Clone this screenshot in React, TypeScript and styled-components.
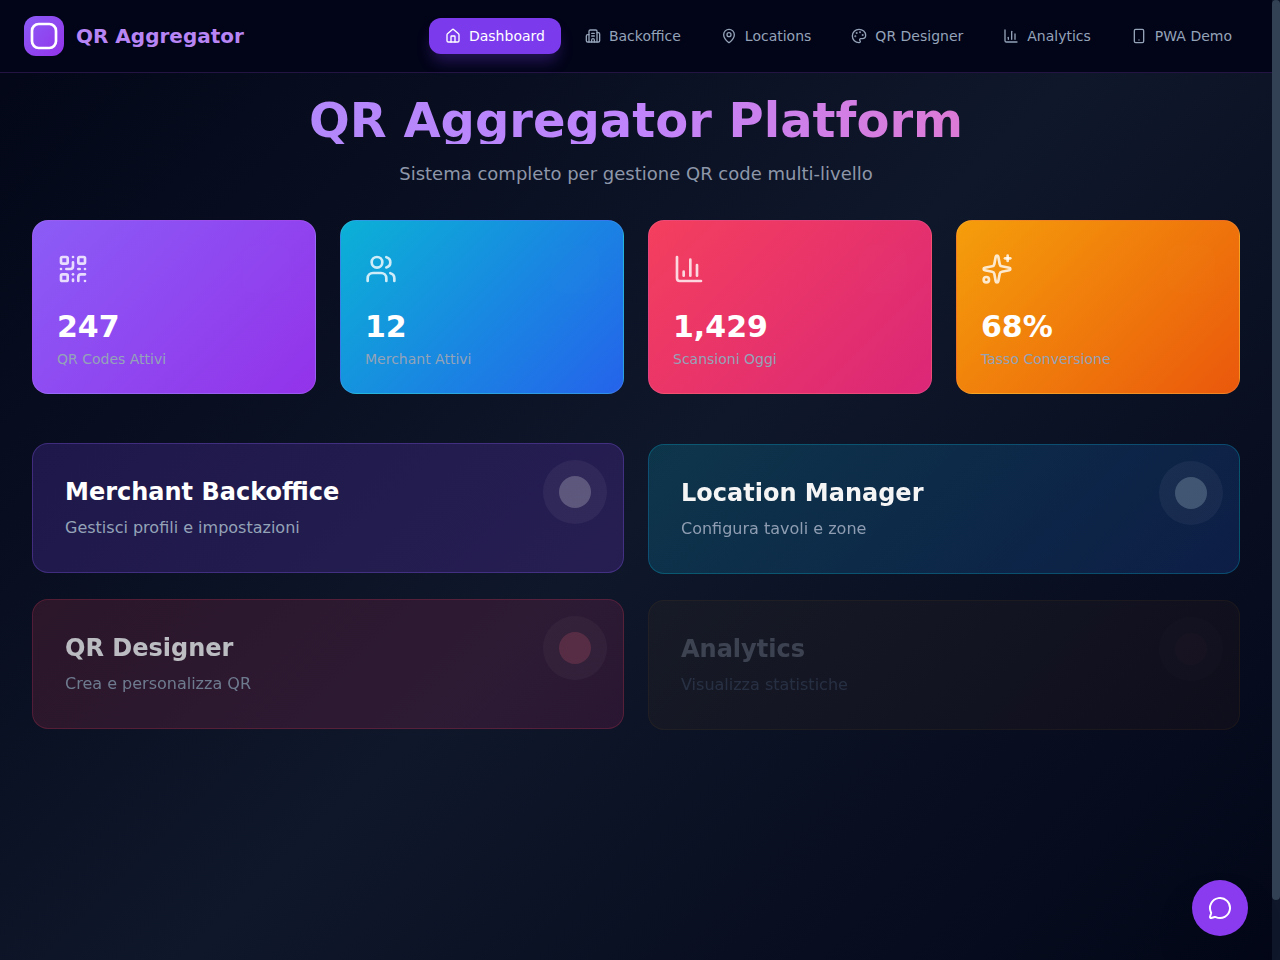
import React from "react";
import styled, { createGlobalStyle } from "styled-components";
import {
  BarChart3,
  Building2,
  Home,
  MapPin,
  MessageCircle,
  Palette,
  QrCode,
  Smartphone,
  Sparkles,
  Users,
} from "lucide-react";

const GlobalStyle = createGlobalStyle`
  * { box-sizing: border-box; }
  html, body { margin: 0; padding: 0; height: 100%; overflow: hidden; }
  body {
    font-family: "DejaVu Sans", sans-serif;
    background: #020617;
    color: #fff;
  }
`;

const Viewport = styled.div`
  position: relative;
  height: 100vh;
  overflow: hidden;
  display: flex;
  align-items: flex-start;
`;

const ScrollRail = styled.div`
  flex: 0 0 8px;
  height: 100vh;
  background: #0f172a;
`;

const ScrollThumb = styled.div`
  height: 900px;
  border-radius: 4px;
  background: #334155;
`;

const Page = styled.div`
  flex: 1;
  min-width: 0;
  min-height: 1024px;
  background: linear-gradient(135deg, #020617 0%, #0f172a 50%, #020617 100%);
`;

const Nav = styled.nav`
  height: 73px;
  padding: 0 24px;
  display: flex;
  align-items: center;
  justify-content: space-between;
  background: rgba(2, 4, 24, 0.96);
  border-bottom: 1px solid rgba(168, 85, 247, 0.2);
`;

const Brand = styled.div`
  display: flex;
  align-items: center;
  gap: 12px;
`;

const LogoBox = styled.div`
  width: 40px;
  height: 40px;
  border-radius: 12px;
  display: flex;
  align-items: center;
  justify-content: center;
  background: linear-gradient(135deg, #8b5cf6, #9333ea);
`;

const BrandName = styled.span`
  font-size: 20px;
  line-height: 28px;
  font-weight: 700;
  color: #b885f5;
`;

const NavList = styled.div`
  display: flex;
  align-items: center;
  gap: 8px;
`;

const NavItem = styled.a<{ $active?: boolean }>`
  height: 36px;
  padding: 0 16px;
  display: flex;
  align-items: center;
  gap: 8px;
  border-radius: 12px;
  font-size: 14px;
  color: ${(p) => (p.$active ? "#fff" : "#94a3b8")};
  background: ${(p) => (p.$active ? "#7c3aed" : "transparent")};
  box-shadow: ${(p) =>
    p.$active ? "0 10px 15px -3px rgba(124, 58, 237, 0.3)" : "none"};
`;

const Main = styled.main`
  padding: 23px 32px 32px;
`;

const Hero = styled.header`
  text-align: center;
  margin-bottom: 32px;
`;

const Title = styled.h1`
  margin: 0 0 16px;
  font-size: 48px;
  line-height: 48px;
  font-weight: 700;
  color: transparent;
  background: linear-gradient(90deg, #a78bfa, #c084fc 50%, #f472b6);
  -webkit-background-clip: text;
  background-clip: text;
`;

const Subtitle = styled.p`
  margin: 0;
  font-size: 18px;
  line-height: 28px;
  color: #8e97a9;
`;

const StatsGrid = styled.section`
  display: grid;
  grid-template-columns: repeat(4, 1fr);
  gap: 24px;
  margin-bottom: 48px;
`;

const StatCard = styled.div<{ $from: string; $to: string }>`
  position: relative;
  overflow: hidden;
  padding: 24px;
  border: 1px solid rgba(255, 255, 255, 0.1);
  border-radius: 16px;
  background: linear-gradient(135deg, ${(p) => p.$from}, ${(p) => p.$to});
`;

const StatIcon = styled.div`
  width: 32px;
  height: 32px;
  margin: 8px 0 22px;
  color: rgba(255, 255, 255, 0.8);

  svg {
    display: block;
  }
`;

const StatGhost = styled.div`
  position: absolute;
  top: 24px;
  right: 24px;
  width: 48px;
  height: 48px;
  border-radius: 12px;
  background: rgba(255, 255, 255, 0.008);
`;

const StatValue = styled.div`
  font-size: 30px;
  line-height: 40px;
  font-weight: 700;
  color: #fff;
  margin-bottom: 2px;
`;

const StatLabel = styled.div`
  font-size: 14px;
  line-height: 20px;
  color: #94a3b8;
`;

const ActionGrid = styled.section`
  display: grid;
  grid-template-columns: repeat(2, 1fr);
  gap: 24px;
`;

const ActionCard = styled.div<{
  $from: string;
  $to: string;
  $border: string;
  $fade: number;
  $drop: number;
}>`
  position: relative;
  overflow: hidden;
  padding: 32px;
  border: 1px solid ${(p) => p.$border};
  border-radius: 16px;
  background: linear-gradient(135deg, ${(p) => p.$from}, ${(p) => p.$to});
  opacity: ${(p) => p.$fade};
  transform: translateY(${(p) => p.$drop}px);
`;

const ActionTitle = styled.h3`
  margin: 0 0 8px;
  font-size: 24px;
  line-height: 32px;
  font-weight: 700;
  color: #fff;
`;

const ActionText = styled.p`
  margin: 0;
  font-size: 16px;
  line-height: 24px;
  color: #94a3b8;
`;

const Halo = styled.div`
  position: absolute;
  top: 16px;
  right: 16px;
  width: 64px;
  height: 64px;
  border-radius: 50%;
  display: flex;
  align-items: center;
  justify-content: center;
  background: rgba(255, 255, 255, 0.05);
`;

const HaloCore = styled.div<{ $tint: string }>`
  width: 32px;
  height: 32px;
  border-radius: 50%;
  background: ${(p) => p.$tint};
`;

const ChatButton = styled.button`
  position: absolute;
  right: 32px;
  bottom: 24px;
  width: 56px;
  height: 56px;
  padding: 0;
  border: 0;
  border-radius: 50%;
  display: flex;
  align-items: center;
  justify-content: center;
  color: #fff;
  background: #8a3bef;
  box-shadow: 0 25px 50px -12px rgba(0, 0, 0, 0.25);
`;

const navItems = [
  { label: "Dashboard", icon: Home, active: true },
  { label: "Backoffice", icon: Building2 },
  { label: "Locations", icon: MapPin },
  { label: "QR Designer", icon: Palette },
  { label: "Analytics", icon: BarChart3 },
  { label: "PWA Demo", icon: Smartphone },
];

const stats = [
  { value: "247", label: "QR Codes Attivi", icon: QrCode, from: "#8b5cf6", to: "#9333ea" },
  { value: "12", label: "Merchant Attivi", icon: Users, from: "#0bb1d6", to: "#2563eb" },
  { value: "1,429", label: "Scansioni Oggi", icon: BarChart3, from: "#f43f5e", to: "#db2777" },
  { value: "68%", label: "Tasso Conversione", icon: Sparkles, from: "#f59e0b", to: "#ea580c" },
];

const actions = [
  {
    title: "Merchant Backoffice",
    text: "Gestisci profili e impostazioni",
    from: "rgba(124, 70, 250, 0.2)",
    to: "rgba(130, 60, 240, 0.2)",
    border: "rgba(139, 92, 246, 0.3)",
    tint: "rgba(255, 255, 255, 0.22)",
    fade: 1,
    drop: 1,
  },
  {
    title: "Location Manager",
    text: "Configura tavoli e zone",
    from: "rgba(6, 182, 212, 0.2)",
    to: "rgba(37, 99, 235, 0.2)",
    border: "rgba(6, 182, 212, 0.3)",
    tint: "rgba(190, 215, 225, 0.26)",
    fade: 0.96,
    drop: 2,
  },
  {
    title: "QR Designer",
    text: "Crea e personalizza QR",
    from: "rgba(244, 63, 94, 0.2)",
    to: "rgba(219, 39, 119, 0.2)",
    border: "rgba(244, 63, 94, 0.3)",
    tint: "rgba(244, 100, 120, 0.28)",
    fade: 0.72,
    drop: 3,
  },
  {
    title: "Analytics",
    text: "Visualizza statistiche",
    from: "rgba(245, 158, 11, 0.2)",
    to: "rgba(234, 88, 12, 0.2)",
    border: "rgba(245, 158, 11, 0.3)",
    tint: "rgba(244, 63, 94, 0.15)",
    fade: 0.2,
    drop: 4,
  },
];

export default function App() {
  return (
    <Viewport>
      <GlobalStyle />
      <Page>
        <Nav>
          <Brand>
            <LogoBox>
              <svg width="32" height="32" viewBox="0 0 24 24" fill="none" stroke="#fff" strokeWidth="2">
                <rect x="3" y="3" width="18" height="18" rx="5" />
              </svg>
            </LogoBox>
            <BrandName>QR Aggregator</BrandName>
          </Brand>
          <NavList>
            {navItems.map((item) => (
              <NavItem key={item.label} $active={item.active}>
                <item.icon size={16} />
                {item.label}
              </NavItem>
            ))}
          </NavList>
        </Nav>
        <Main>
          <Hero>
            <Title>QR Aggregator Platform</Title>
            <Subtitle>Sistema completo per gestione QR code multi-livello</Subtitle>
          </Hero>
          <StatsGrid>
            {stats.map((stat) => (
              <StatCard key={stat.label} $from={stat.from} $to={stat.to}>
                <StatGhost />
                <StatIcon>
                  <stat.icon size={32} strokeWidth={2} />
                </StatIcon>
                <StatValue>{stat.value}</StatValue>
                <StatLabel>{stat.label}</StatLabel>
              </StatCard>
            ))}
          </StatsGrid>
          <ActionGrid>
            {actions.map((action) => (
              <ActionCard
                key={action.title}
                $from={action.from}
                $to={action.to}
                $border={action.border}
                $fade={action.fade}
                $drop={action.drop}
              >
                <Halo>
                  <HaloCore $tint={action.tint} />
                </Halo>
                <ActionTitle>{action.title}</ActionTitle>
                <ActionText>{action.text}</ActionText>
              </ActionCard>
            ))}
          </ActionGrid>
        </Main>
      </Page>
      <ScrollRail>
        <ScrollThumb />
      </ScrollRail>
      <ChatButton aria-label="Chat">
        <MessageCircle size={24} />
      </ChatButton>
    </Viewport>
  );
}
